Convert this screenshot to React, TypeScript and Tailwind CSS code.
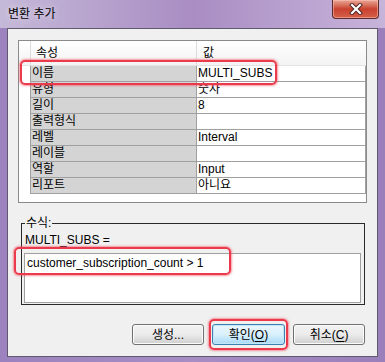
import React from "react";

const font = { fontFamily: '"Liberation Sans", "Noto Sans CJK KR", sans-serif' };

const rows: { name: string; value: string }[] = [
  { name: "이름", value: "MULTI_SUBS" },
  { name: "유형", value: "숫자" },
  { name: "길이", value: "8" },
  { name: "출력형식", value: "" },
  { name: "레벨", value: "Interval" },
  { name: "레이블", value: "" },
  { name: "역할", value: "Input" },
  { name: "리포트", value: "아니요" },
];

function DialogButton({
  children,
  primary,
}: {
  children: React.ReactNode;
  primary?: boolean;
}) {
  return (
    <button
      className={
        primary
          ? "flex h-[21px] w-[73px] items-center justify-center rounded-[3px] border border-[#3c7fb1] bg-gradient-to-b from-[#eaf6fd] via-[#d9f0fc] to-[#a7d9f5] text-[12px] text-black shadow-[inset_0_0_0_1px_#c4e5f6]"
          : "flex h-[21px] w-[72px] items-center justify-center rounded-[3px] border border-[#707070] bg-gradient-to-b from-[#f2f2f2] via-[#ebebeb] to-[#cfcfcf] text-[12px] text-black shadow-[inset_0_0_0_1px_#fcfcfc]"
      }
    >
      {children}
    </button>
  );
}

function Highlight({ className }: { className: string }) {
  return (
    <div
      className={`pointer-events-none absolute rounded-[5px] border-2 border-[#ec3a4d] shadow-[0_0_2px_1px_rgba(240,70,90,0.55)] ${className}`}
    />
  );
}

export default function App() {
  return (
    <div
      style={font}
      className="relative flex h-[362px] w-[385px] flex-col overflow-hidden bg-gradient-to-r from-[#9c82be] via-[#a78dc4] to-[#9a7fbb] px-[7px] pb-[5px]"
    >
      {/* title bar */}
      <div className="-mx-[7px] flex h-[28px] items-start justify-between bg-gradient-to-r from-[#c5b9d8] via-[#a98dc3] to-[#c7b4da] pl-[8px] pr-[6px]">
        <span className="mt-[6px] text-[12px] leading-[16px] text-black [text-shadow:0_0_6px_rgba(255,255,255,0.8)]">
          변환 추가
        </span>
        <div className="flex h-[19px] w-[47px] items-center justify-center rounded-b-[4px] border border-t-0 border-[#5e2a2a] bg-gradient-to-b from-[#e9a797] via-[#c8412f] to-[#d5604a] shadow-[inset_0_0_0_1px_rgba(255,200,190,0.5)]">
          <svg width="14" height="12" viewBox="0 0 14 12">
            <path d="M3 2 L11 10 M11 2 L3 10" stroke="#4a2020" strokeWidth="4" strokeLinecap="square" />
            <path d="M3 2 L11 10 M11 2 L3 10" stroke="#ffffff" strokeWidth="2.2" strokeLinecap="square" />
          </svg>
        </div>
      </div>

      {/* client area */}
      <div className="flex h-[329px] flex-col border border-[#5f5a6e] bg-[#f0f0f0]">
        {/* property grid */}
        <div className="mx-[10px] mt-[11px] flex h-[163px] flex-col border border-[#8a8a8a] bg-white text-[12px] text-black">
          <div className="flex h-[25px] border-b border-[#e3e3e3] bg-gradient-to-b from-white to-[#f3f3f3]">
            <div className="relative w-[11px]">
              <span className="absolute bottom-[1px] left-[4px] text-[8px] leading-[8px] text-[#444]">..</span>
            </div>
            <div className="flex w-[166px] items-center border-l border-[#dcdcdc] pl-[5px]">속성</div>
            <div className="flex flex-1 items-center border-l border-[#dcdcdc] pl-[6px]">값</div>
          </div>
          {rows.map((r) => (
            <div key={r.name} className="flex h-[16px]">
              <div className="w-[11px] border-b border-white" />
              <div className="w-[166px] overflow-hidden whitespace-nowrap border-b border-l border-[#a0a0a0] bg-[#d4d4d4] pl-[1px] leading-[15px]">
                {r.name}
              </div>
              <div className="flex-1 overflow-hidden whitespace-nowrap border-b border-l border-r border-[#a0a0a0] pl-[1px] leading-[15px]">
                {r.value}
              </div>
            </div>
          ))}
          <div className="flex-1" />
        </div>

        {/* formula group */}
        <fieldset className="ml-[13px] mr-[12px] mt-[13px] border border-[#2a2a2a] pb-[1px] text-[12px] text-black">
          <legend className="ml-[3px] px-[1px] leading-[14px]">수식:</legend>
          <div className="pl-[3px] pt-[3px] leading-[14px]">MULTI_SUBS =</div>
          <div className="ml-[2px] mr-[3px] mt-[6px] h-[50px] border border-[#a0a0a0] bg-white pl-[2px] pt-[1px] leading-[16px]">
            customer_subscription_count &gt; 1
          </div>
        </fieldset>

        {/* buttons */}
        <div className="mr-[12px] mt-[19px] flex justify-end gap-[8px]">
          <DialogButton>생성...</DialogButton>
          <DialogButton primary>
            확인(<span className="underline underline-offset-2">O</span>)
          </DialogButton>
          <DialogButton>
            취소(<span className="underline underline-offset-2">C</span>)
          </DialogButton>
        </div>
      </div>

      {/* red annotation marks */}
      <Highlight className="left-[20px] top-[60px] h-[25px] w-[257px]" />
      <Highlight className="left-[14px] top-[247px] h-[28px] w-[217px]" />
      <Highlight className="left-[209px] top-[319px] h-[31px] w-[79px]" />
    </div>
  );
}
